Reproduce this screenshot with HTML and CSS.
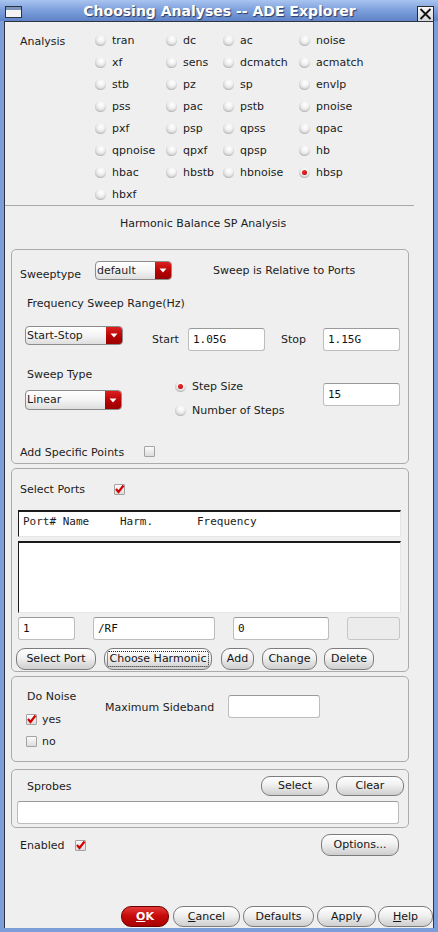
FILE: index.html
```html
<!DOCTYPE html>
<html>
<head>
<meta charset="utf-8">
<title>Choosing Analyses -- ADE Explorer</title>
<link rel="stylesheet" href="styles.css">
</head>
<body>
<div class="window">
  <div class="titlebar">
    <svg class="tb-icon" width="17" height="12" viewBox="0 0 17 12"><rect x="0.5" y="0.5" width="16" height="11" fill="#f4f4f4" stroke="#2c3440"/><rect x="1" y="1" width="15" height="3" fill="#7d93b8"/></svg>
    <div class="tb-title">Choosing Analyses -- ADE Explorer</div>
    <svg class="tb-close" width="17" height="16" viewBox="0 0 17 16"><defs><linearGradient id="cg" x1="0" y1="0" x2="0" y2="1"><stop offset="0" stop-color="#fafafa"/><stop offset="1" stop-color="#d4d4d4"/></linearGradient></defs><rect x="0.5" y="0.5" width="16" height="15" fill="url(#cg)" stroke="#2a2a2a"/><path d="M3.5 3 L13.5 13 M13.5 3 L3.5 13" stroke="#111" stroke-width="1.8"/></svg>
  </div>
  <div class="client">
    <div class="scroll">
      <div class="analysis">
        <div class="an-label">Analysis</div>
        <label class="rb"><span class="radio"></span>tran</label>
        <label class="rb"><span class="radio"></span>dc</label>
        <label class="rb"><span class="radio"></span>ac</label>
        <label class="rb"><span class="radio"></span>noise</label>
        <label class="rb"><span class="radio"></span>xf</label>
        <label class="rb"><span class="radio"></span>sens</label>
        <label class="rb"><span class="radio"></span>dcmatch</label>
        <label class="rb"><span class="radio"></span>acmatch</label>
        <label class="rb"><span class="radio"></span>stb</label>
        <label class="rb"><span class="radio"></span>pz</label>
        <label class="rb"><span class="radio"></span>sp</label>
        <label class="rb"><span class="radio"></span>envlp</label>
        <label class="rb"><span class="radio"></span>pss</label>
        <label class="rb"><span class="radio"></span>pac</label>
        <label class="rb"><span class="radio"></span>pstb</label>
        <label class="rb"><span class="radio"></span>pnoise</label>
        <label class="rb"><span class="radio"></span>pxf</label>
        <label class="rb"><span class="radio"></span>psp</label>
        <label class="rb"><span class="radio"></span>qpss</label>
        <label class="rb"><span class="radio"></span>qpac</label>
        <label class="rb"><span class="radio"></span>qpnoise</label>
        <label class="rb"><span class="radio"></span>qpxf</label>
        <label class="rb"><span class="radio"></span>qpsp</label>
        <label class="rb"><span class="radio"></span>hb</label>
        <label class="rb"><span class="radio"></span>hbac</label>
        <label class="rb"><span class="radio"></span>hbstb</label>
        <label class="rb"><span class="radio"></span>hbnoise</label>
        <label class="rb"><span class="radio on"></span>hbsp</label>
        <label class="rb"><span class="radio"></span>hbxf</label>
      </div>
      <div class="sep"></div>
      <div class="heading">Harmonic Balance SP Analysis</div>

      <div class="box box1">
        <div class="rowA">
          <div class="lbl-sweeptype">Sweeptype</div>
          <div class="dd w77"><span class="dd-text">default</span><span class="dd-arrow"><svg width="8" height="5" viewBox="0 0 8 5"><path d="M0.5 0.5 H7.5 L4 4.5 Z" fill="#fff"/></svg></span></div>
          <div class="rel">Sweep is Relative to Ports</div>
        </div>
        <div class="freq">Frequency Sweep Range(Hz)</div>
        <div class="rowB">
          <div class="dd w98"><span class="dd-text">Start-Stop</span><span class="dd-arrow"><svg width="8" height="5" viewBox="0 0 8 5"><path d="M0.5 0.5 H7.5 L4 4.5 Z" fill="#fff"/></svg></span></div>
          <div class="lbl-start">Start</div>
          <div class="field w77">1.05G</div>
          <div class="lbl-stop">Stop</div>
          <div class="field w77">1.15G</div>
        </div>
        <div class="rowC">
          <div class="colST">
            <div class="lbl-st">Sweep Type</div>
            <div class="dd w97 h20"><span class="dd-text">Linear</span><span class="dd-arrow"><svg width="8" height="5" viewBox="0 0 8 5"><path d="M0.5 0.5 H7.5 L4 4.5 Z" fill="#fff"/></svg></span></div>
          </div>
          <div class="colRad">
            <label class="rb2"><span class="radio on"></span>Step Size</label>
            <label class="rb2"><span class="radio"></span>Number of Steps</label>
          </div>
          <div class="colIn">
            <div class="field w77">15</div>
          </div>
        </div>
        <div class="rowD">
          <div class="lbl-asp">Add Specific Points</div>
          <span class="chk"></span>
        </div>
      </div>

      <div class="box box2">
        <div class="rowSP">
          <div class="lbl-sp">Select Ports</div>
          <span class="chk"><svg width="11" height="11" viewBox="0 0 11 11"><path d="M2 5 L4.5 8 L9.5 1.5" fill="none" stroke="#d40000" stroke-width="2.2"/></svg></span>
        </div>
        <div class="listhead"><span class="c1">Port# Name</span><span class="c2">Harm.</span><span class="c3">Frequency</span></div>
        <div class="listbody"></div>
        <div class="inputsrow">
          <div class="field w57 ml6">1</div>
          <div class="field w122 ml18">/RF</div>
          <div class="field w96 ml18">0</div>
          <div class="field w53 ml18 disabled"></div>
        </div>
        <div class="btnrow">
          <div class="btn b-sel">Select Port</div>
          <div class="btn b-ch focus"><span>Choose Harmonic</span></div>
          <div class="btn b-add">Add</div>
          <div class="btn b-chg">Change</div>
          <div class="btn b-del">Delete</div>
        </div>
      </div>

      <div class="box box3">
        <div class="noiseRow">
          <div class="colDN">
            <div class="lbl-dn">Do Noise</div>
            <label class="cbrow"><span class="chk"><svg width="11" height="11" viewBox="0 0 11 11"><path d="M2 5 L4.5 8 L9.5 1.5" fill="none" stroke="#d40000" stroke-width="2.2"/></svg></span>yes</label>
            <label class="cbrow"><span class="chk"></span>no</label>
          </div>
          <div class="lbl-ms">Maximum Sideband</div>
          <div class="field w92 ms-in"></div>
        </div>
      </div>

      <div class="box box4">
        <div class="sprow">
          <div class="lbl-spr">Sprobes</div>
          <div class="btn b-s68">Select</div>
          <div class="btn b-s68 ml7">Clear</div>
        </div>
        <div class="field w382 spr-in"></div>
      </div>

      <div class="enrow">
        <div class="lbl-en">Enabled</div>
        <span class="chk"><svg width="11" height="11" viewBox="0 0 11 11"><path d="M2 5 L4.5 8 L9.5 1.5" fill="none" stroke="#d40000" stroke-width="2.2"/></svg></span>
        <div class="btn b-opt">Options...</div>
      </div>
    </div>
    <div class="footer">
      <div class="btn ok"><u>O</u>K</div>
      <div class="btn b-cancel"><u>C</u>ancel</div>
      <div class="btn b-def">Defaults</div>
      <div class="btn b-apply">Apply</div>
      <div class="btn b-help"><u>H</u>elp</div>
    </div>
  </div>
</div>
</body>
</html>
```
FILE: styles.css
```css
* { box-sizing: border-box; }
html, body { margin: 0; padding: 0; }
body {
  background: #7b9bd6;
  font-family: "DejaVu Sans", sans-serif;
  font-size: 11px;
  color: #1c1c1c;
}
.window {
  width: 438px;
  height: 932px;
  background: #7d9dd8;
  padding: 0 4px 4px 4px;
  display: flex;
  flex-direction: column;
  overflow: hidden;
}
.titlebar {
  height: 21px;
  margin: 0 -4px;
  display: flex;
  align-items: center;
  background: linear-gradient(#a9c4ef, #7fa1dd 45%, #5f83c7);
  padding: 3px 4px 0 5px;
}
.tb-icon { flex: none; }
.tb-title {
  flex: 1;
  text-align: center;
  font-family: "DejaVu Sans", sans-serif;
  font-weight: bold;
  font-size: 14px;
  color: #fff;
  text-shadow: 1px 1px 1px #2b3d66;
  line-height: 16px;
  margin-top: -2px;
}
.tb-close { flex: none; margin-top: 3px; }
.client {
  flex: 1;
  background: #efefef;
  border: 1px solid #2e3440;
  border-bottom: none;
  display: flex;
  flex-direction: column;
}
.scroll { width: 409px; flex: 1; }

/* analysis radios */
.analysis {
  display: grid;
  grid-template-columns: 75px 71px 57px 76px 1fr;
  grid-auto-rows: 22px;
  padding: 7px 0 0 15px;
  height: 183px;
}
.an-label {
  grid-column: 1;
  grid-row: 1 / span 8;
  padding-top: 6px;
  line-height: 13px;
}
.rb, .rb2 {
  display: flex;
  align-items: center;
  gap: 6px;
  white-space: nowrap;
}
.radio {
  width: 11px;
  height: 11px;
  border-radius: 50%;
  flex: none;
  background: radial-gradient(circle at 55% 35%, #ffffff 0%, #f2f2f2 35%, #cfcfcf 75%, #a9a9a9 100%);
  box-shadow: inset 0 -1px 1px rgba(0,0,0,0.12);
  position: relative;
}
.radio.on::after {
  content: "";
  position: absolute;
  left: 3px;
  top: 3px;
  width: 5px;
  height: 5px;
  border-radius: 50%;
  background: radial-gradient(circle at 40% 35%, #f03030, #b00000);
}
.sep { height: 1px; background: #a8a8a8; }
.heading {
  height: 43px;
  padding: 11px 0 0 115px;
  line-height: 13px;
}

/* boxes */
.box {
  margin-left: 6px;
  width: 398px;
  border: 1px solid #ababab;
  border-radius: 5px;
}
.box1 { height: 215px; }
.box2 { height: 204px; margin-top: 4px; }
.box3 { height: 86px; margin-top: 4px; }
.box4 { height: 59px; margin-top: 7px; }

/* dropdown */
.dd {
  display: flex;
  height: 19px;
  border: 1px solid #8c8c8c;
  border-radius: 4px;
  background: linear-gradient(#ffffff, #f4f4f4 50%, #dedede);
  overflow: hidden;
  flex: none;
}
.dd.h20 { height: 20px; }
.dd-text {
  flex: 1;
  padding-left: 1px;
  line-height: 17px;
  white-space: nowrap;
}
.dd-arrow {
  width: 16px;
  background: linear-gradient(#dc2020, #b30000 60%, #9a0000);
  display: flex;
  align-items: center;
  justify-content: center;
}
.w77 { width: 77px; }
.w97 { width: 97px; }
.w98 { width: 98px; }
.w57 { width: 57px; }
.w122 { width: 122px; }
.w96 { width: 96px; }
.w53 { width: 53px; }
.w92 { width: 92px; }
.w382 { width: 382px; }
.ml6 { margin-left: 6px; }
.ml7 { margin-left: 7px; }
.ml18 { margin-left: 18px; }

/* text field */
.field {
  height: 23px;
  flex: none;
  background: #fff;
  border: 1px solid #bdbdbd;
  border-top-color: #9a9a9a;
  border-radius: 3px;
  font-family: "DejaVu Sans Mono", monospace;
  font-size: 11px;
  line-height: 21px;
  padding-left: 4px;
  color: #111;
}
.field.disabled { background: #ececec; border-color: #c6c6c6; }

/* box1 rows */
.rowA { display: flex; margin-top: 11px; height: 19px; }
.lbl-sweeptype { margin-left: 8px; width: 75px; padding-top: 7px; line-height: 13px; }
.rel { margin-left: 41px; padding-top: 3px; line-height: 13px; white-space: nowrap; }
.freq { margin: 17px 0 0 15px; line-height: 13px; }
.rowB { display: flex; margin-top: 16px; height: 25px; }
.rowB .dd { margin-left: 13px; }
.lbl-start { margin-left: 29px; width: 36px; padding-top: 7px; line-height: 13px; }
.lbl-stop { margin-left: 16px; width: 42px; padding-top: 7px; line-height: 13px; }
.rowB .field { margin-top: 2px; }
.rowC { display: flex; height: 71px; }
.colST { margin-left: 13px; width: 97px; }
.lbl-st { padding-left: 2px; margin-top: 17px; line-height: 13px; }
.colST .dd { margin-top: 9px; }
.colRad { margin-left: 53px; width: 148px; padding-top: 23px; }
.rb2 { height: 24px; }
.colIn { padding-top: 32px; }
.rowD { display: flex; align-items: flex-start; margin-top: 24px; }
.lbl-asp { margin-left: 8px; width: 124px; line-height: 13px; }

/* checkbox */
.chk {
  width: 11px;
  height: 11px;
  flex: none;
  display: inline-block;
  border: 1px solid #a3a3a3;
  border-radius: 1px;
  background: linear-gradient(#fbfbfb, #dcdcdc);
  position: relative;
}
.chk svg { position: absolute; left: -1px; top: -1px; }

/* box2 */
.rowSP { display: flex; align-items: center; margin-top: 14px; height: 13px; }
.lbl-sp { margin-left: 8px; width: 94px; line-height: 13px; }
.listhead, .listbody {
  margin: 0 0 0 6px;
  width: 383px;
  background: #fff;
  border-top: 2px solid #1b1b1b;
  border-left: 1px solid #1b1b1b;
  border-right: 1px solid #e6e6e6;
  border-bottom: 1px solid #e6e6e6;
}
.listhead {
  margin-top: 14px;
  height: 27px;
  display: flex;
  font-family: "DejaVu Sans Mono", monospace;
  font-size: 11px;
  line-height: 13px;
  padding: 3px 0 0 4px;
  white-space: pre;
}
.c1 { width: 97px; }
.c2 { width: 77px; }
.listbody { margin-top: 4px; height: 72px; }
.inputsrow { display: flex; margin-top: 4px; height: 23px; }
.btnrow { display: flex; margin-top: 8px; height: 22px; }

/* buttons */
.btn {
  flex: none;
  height: 22px;
  border: 1px solid #7c7c7c;
  border-radius: 9px;
  background: linear-gradient(#fefefe, #f0f0f0 45%, #dadada 80%, #cfcfcf);
  text-align: center;
  line-height: 20px;
  white-space: nowrap;
  color: #141414;
}
.b-sel { margin-left: 4px; width: 80px; }
.b-ch { margin-left: 8px; width: 108px; padding: 2px; }
.b-ch span {
  display: block;
  border: 1px dotted #222;
  line-height: 14px;
  height: 16px;
  border-radius: 2px;
}
.b-add { margin-left: 9px; width: 33px; }
.b-chg { margin-left: 8px; width: 55px; }
.b-del { margin-left: 7px; width: 50px; }

/* box3 */
.noiseRow { display: flex; }
.colDN { margin-left: 14px; width: 79px; }
.lbl-dn { padding-left: 1px; margin-top: 13px; line-height: 13px; margin-bottom: 5px; }
.cbrow { display: flex; align-items: center; gap: 5px; height: 22px; }
.lbl-ms { margin-top: 24px; width: 123px; line-height: 13px; white-space: nowrap; }
.ms-in { margin-top: 18px; }

/* box4 */
.sprow { display: flex; align-items: center; margin-top: 6px; height: 20px; }
.lbl-spr { margin-left: 15px; flex: 1; line-height: 13px; }
.b-s68 { width: 68px; height: 20px; line-height: 18px; }
.sprow .b-s68:last-child { margin-right: 4px; }
.spr-in { margin: 5px 0 0 5px; }

/* enabled */
.enrow { display: flex; align-items: center; margin-top: 6px; height: 22px; }
.lbl-en { margin-left: 15px; width: 55px; line-height: 13px; }
.b-opt { margin-left: auto; margin-right: 15px; width: 78px; }

/* footer */
.footer {
  display: flex;
  justify-content: flex-end;
  height: 21px;
  margin-bottom: 1px;
}
.footer .btn { height: 21px; line-height: 19px; border-radius: 10px; }
.ok {
  width: 48px;
  background: linear-gradient(#e43a3a, #c80c0c 45%, #a80000);
  border-color: #6a0000;
  color: #fff;
  font-weight: bold;
}
.b-cancel { width: 67px; margin-left: 4px; }
.b-def { width: 71px; margin-left: 3px; }
.b-apply { width: 59px; margin-left: 3px; }
.b-help { width: 55px; margin-left: 2px; }
```
